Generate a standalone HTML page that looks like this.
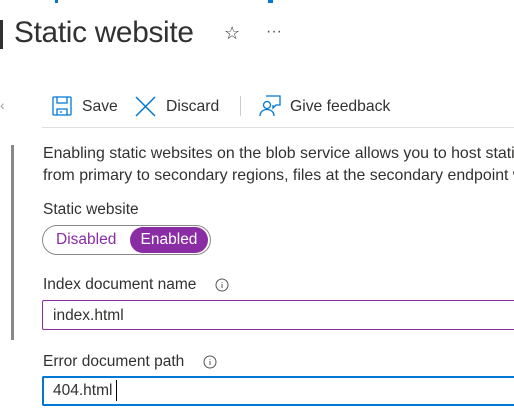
<!DOCTYPE html>
<html><head><meta charset="utf-8"><style>
*{margin:0;padding:0;box-sizing:border-box}
html,body{width:514px;height:418px;overflow:hidden}
body{background:#fff;font-family:"Liberation Sans",sans-serif;color:#323130;position:relative}
.a{position:absolute;white-space:nowrap}
</style></head><body>
<div class="a" style="left:55px;top:0;width:3px;height:3px;background:#0078d4"></div>
<div class="a" style="left:268px;top:0;width:5px;height:3px;background:#0078d4"></div>
<div class="a" style="left:0;top:20px;width:3px;height:29px;background:#323130"></div>
<div class="a" style="left:14px;top:16px;font-size:29.8px;letter-spacing:-0.3px">Static website</div>
<div class="a" style="left:224px;top:23px;font-size:18px">☆</div>
<div class="a" style="left:266px;top:23px;font-size:16px;color:#555">···</div>
<div class="a" style="left:0;top:97px;font-size:14px;color:#999">‹</div>
<svg class="a" style="left:52px;top:96px" width="20" height="20" viewBox="0 0 20 20" fill="none" stroke="#0078d4" stroke-width="1.3"><rect x="1" y="1" width="18" height="18" rx="1"/><path d="M5 1v6h10V1M5 19v-6h10v6M8 16h2"/></svg>
<div class="a" style="left:82px;top:98px;font-size:15.7px">Save</div>
<svg class="a" style="left:135px;top:96px" width="21" height="21" viewBox="0 0 21 21" stroke="#0078d4" stroke-width="1.5"><path d="M1 1L20 20M20 1L1 20"/></svg>
<div class="a" style="left:166px;top:98px;font-size:15.7px">Discard</div>
<div class="a" style="left:240px;top:96px;width:1px;height:20px;background:#ccc"></div>
<svg class="a" style="left:259px;top:95px" width="22" height="22" viewBox="0 0 22 22" fill="none" stroke="#0078d4" stroke-width="1.3"><path d="M7 1h14v9h-4l-3 3v-3"/><circle cx="8" cy="10" r="3.5"/><path d="M1 21c0-4 3-6.5 7-6.5s7 2.5 7 6.5"/></svg>
<div class="a" style="left:290px;top:98px;font-size:15.7px">Give feedback</div>
<div class="a" style="left:42px;top:127px;width:472px;height:1px;background:#e1dfdd"></div>
<div class="a" style="left:11px;top:145px;width:3px;height:195px;background:#8a8886"></div>
<div class="a" style="left:43px;top:143px;width:471px;overflow:hidden;font-size:15.9px;line-height:22px">Enabling static websites on the blob service allows you to host static content<br>from primary to secondary regions, files at the secondary endpoint will be</div>
<div class="a" style="left:43px;top:201px;font-size:15.5px">Static website</div>
<div class="a" style="left:42px;top:225px;width:169px;height:30px;border:1px solid #8a8886;border-radius:15px"></div>
<div class="a" style="left:56px;top:231px;font-size:15.5px;color:#8a2da5">Disabled</div>
<div class="a" style="left:130px;top:227px;width:78px;height:26px;background:#8a2da5;border-radius:13px;color:#fff;font-size:15.5px;text-align:center;line-height:26px">Enabled</div>
<div class="a" style="left:43px;top:276px;font-size:15.5px">Index document name</div>
<svg class="a" style="left:215px;top:278px" width="14" height="14" viewBox="0 0 14 14" fill="none" stroke="#555" stroke-width="1"><circle cx="7" cy="7" r="6"/><path d="M7 6v4M7 4v0.8"/></svg>
<div class="a" style="left:42px;top:300px;width:472px;height:30px;border:1px solid #8a2da5;border-right:none;border-radius:2px 0 0 2px"></div>
<div class="a" style="left:53px;top:307px;font-size:15.5px">index.html</div>
<div class="a" style="left:43px;top:353px;font-size:15.5px">Error document path</div>
<svg class="a" style="left:203px;top:355px" width="14" height="14" viewBox="0 0 14 14" fill="none" stroke="#555" stroke-width="1"><circle cx="7" cy="7" r="6"/><path d="M7 6v4M7 4v0.8"/></svg>
<div class="a" style="left:42px;top:376px;width:472px;height:30px;border:2px solid #0078d4;border-right:none;border-radius:2px 0 0 2px"></div>
<div class="a" style="left:53px;top:382px;font-size:15.5px">404.html</div>
<div class="a" style="left:116px;top:380px;width:1px;height:21px;background:#000"></div>
</body></html>
